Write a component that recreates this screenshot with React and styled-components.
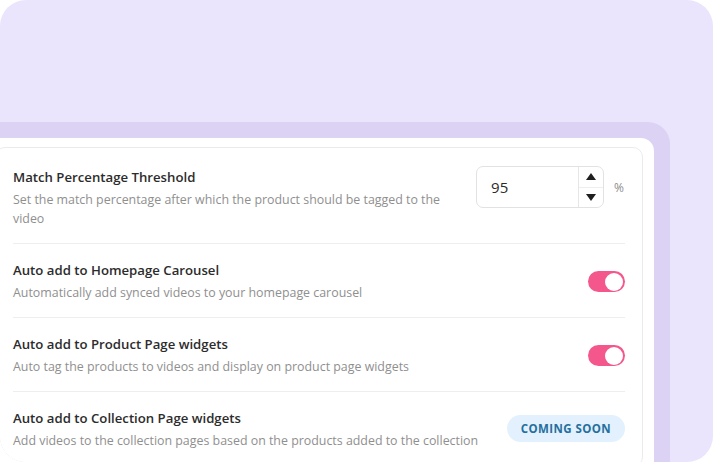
import React from "react";
import styled, { createGlobalStyle } from "styled-components";

const Global = createGlobalStyle`
  html, body { margin: 0; padding: 0; background: #ffffff; }
  body { width: 714px; height: 464px; overflow: hidden; font-family: "Open Sans", "Noto Sans", sans-serif; }
  * { box-sizing: border-box; }
`;

const Panel = styled.div`
  width: 713px;
  height: 462px;
  background: #eae5fd;
  border-radius: 26px;
  padding: 122px 43px 0 0;
  overflow: hidden;
`;

const Frame = styled.div`
  margin-left: -20px;
  height: 100%;
  background: #dcd2f3;
  padding: 16px 16px 0 0;
  border-top-right-radius: 22px;
`;

const Sheet = styled.div`
  height: 100%;
  background: #ffffff;
  border-radius: 0 13px 0 0;
  padding: 9px 11px 0 15px;
`;

const Card = styled.div`
  height: 320px;
  border: 1px solid #ebebeb;
  border-radius: 10px;
  padding: 2px 17px 0 17px;
  background: #fff;
`;

const Row = styled.div`
  display: flex;
  align-items: ${(p) => (p.$top ? "flex-start" : "center")};
  gap: 28px;
  padding: ${(p) => (p.$first ? "18px" : "17px")} 0 15px;
  border-bottom: ${(p) => (p.$last ? "none" : "1px solid #eeeeee")};
`;

const Text = styled.div`
  flex: 1;
  min-width: 0;
`;

const Title = styled.div`
  font-size: 13.2px;
  line-height: 18px;
  font-weight: 600;
  color: #2c2c2c;
`;

const Desc = styled.div`
  margin-top: 4px;
  font-size: 12.4px;
  line-height: 19px;
  color: #8f8f8f;
`;

const InputWrap = styled.div`
  display: flex;
  align-items: center;
  gap: 10px;
  margin-top: -2px;
`;

const NumberBox = styled.div`
  width: 128px;
  height: 42px;
  border: 1px solid #e2e2e2;
  border-radius: 7px;
  display: flex;
  overflow: hidden;
`;

const NumberValue = styled.div`
  flex: 1;
  display: flex;
  align-items: center;
  padding-left: 14px;
  font-size: 15px;
  color: #2a2a2a;
`;

const Spinner = styled.div`
  width: 25px;
  border-left: 1px solid #e6e6e6;
  display: flex;
  flex-direction: column;
`;

const SpinBtn = styled.div`
  flex: 1;
  display: flex;
  align-items: center;
  justify-content: center;
  border-top: ${(p) => (p.$down ? "1px solid #eeeeee" : "none")};
`;

const Unit = styled.span`
  font-size: 12px;
  color: #8d8d8d;
  padding-right: 1px;
`;

const Toggle = styled.div`
  width: 37px;
  height: 21px;
  border-radius: 11px;
  background: #f4578b;
  display: flex;
  align-items: center;
  justify-content: flex-end;
  padding: 0 2px;
  flex-shrink: 0;
`;

const Knob = styled.div`
  width: 18px;
  height: 18px;
  border-radius: 50%;
  background: #ffffff;
`;

const Badge = styled.div`
  flex-shrink: 0;
  height: 27px;
  padding: 0 14px;
  border-radius: 14px;
  background: #e2f1fd;
  color: #256f9e;
  font-size: 11.5px;
  font-weight: 700;
  letter-spacing: 0.4px;
  display: flex;
  align-items: center;
  margin-top: -2px;
`;

const Arrow = ({ down }) => (
  <svg width="10" height="7" viewBox="0 0 10 7">
    <path d={down ? "M0 0 L10 0 L5 7 Z" : "M0 7 L10 7 L5 0 Z"} fill="#1f1f1f" />
  </svg>
);

export default function App() {
  return (
    <>
      <Global />
      <Panel>
        <Frame>
          <Sheet>
            <Card>
              <Row $first $top>
                <Text>
                  <Title>Match Percentage Threshold</Title>
                  <Desc>
                    Set the match percentage after which the product should be tagged to the video
                  </Desc>
                </Text>
                <InputWrap>
                  <NumberBox>
                    <NumberValue>95</NumberValue>
                    <Spinner>
                      <SpinBtn><Arrow /></SpinBtn>
                      <SpinBtn $down><Arrow down /></SpinBtn>
                    </Spinner>
                  </NumberBox>
                  <Unit>%</Unit>
                </InputWrap>
              </Row>
              <Row>
                <Text>
                  <Title>Auto add to Homepage Carousel</Title>
                  <Desc>Automatically add synced videos to your homepage carousel</Desc>
                </Text>
                <Toggle><Knob /></Toggle>
              </Row>
              <Row>
                <Text>
                  <Title>Auto add to Product Page widgets</Title>
                  <Desc>Auto tag the products to videos and display on product page widgets</Desc>
                </Text>
                <Toggle><Knob /></Toggle>
              </Row>
              <Row $last>
                <Text>
                  <Title>Auto add to Collection Page widgets</Title>
                  <Desc>Add videos to the collection pages based on the products added to the collection</Desc>
                </Text>
                <Badge>COMING SOON</Badge>
              </Row>
            </Card>
          </Sheet>
        </Frame>
      </Panel>
    </>
  );
}
